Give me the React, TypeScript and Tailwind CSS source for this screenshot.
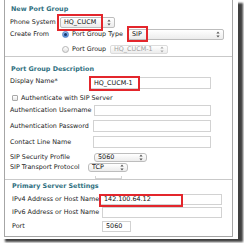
import type { ReactNode } from 'react'

function Arrows({ color = '#555' }: { color?: string }) {
  return (
    <svg width="4" height="7" viewBox="0 0 4 7" className="shrink-0">
      <path d="M2 0.5L3.6 2.6H0.4Z M2 6.5L0.4 4.4H3.6Z" fill={color} />
    </svg>
  )
}

function Select({ className, value, disabled }: { className: string; value: string; disabled?: boolean }) {
  return (
    <div
      className={`flex items-center justify-between rounded-[2px] border px-[3px] bg-gradient-to-b from-white to-[#ececec] ${
        disabled ? 'border-[#dcdcdc] text-[#a0a0a0]' : 'border-[#bdbdbd] text-[#111]'
      } ${className}`}
    >
      <span className="leading-none">{value}</span>
      <Arrows color={disabled ? '#aaa' : '#555'} />
    </div>
  )
}

function Input({ className, value }: { className: string; value?: string }) {
  return (
    <div className={`flex items-center border border-[#d2d2d2] bg-white px-[3px] text-[#111] ${className}`}>
      <span className="leading-none">{value}</span>
    </div>
  )
}

// red annotation box drawn over the field
function Mark({ box, children }: { box: string; children: ReactNode }) {
  return (
    <div className="relative">
      {children}
      <div className={`absolute border-2 border-[#e3262c] ${box}`} />
    </div>
  )
}

function Radio({ on }: { on?: boolean }) {
  return on ? (
    <div className="w-[7px] h-[7px] rounded-full border border-[#5d86c4] bg-gradient-to-b from-[#9cc3f0] to-[#4c8ee0] flex items-center justify-center shrink-0">
      <div className="w-[3px] h-[3px] rounded-full bg-[#17386e]" />
    </div>
  ) : (
    <div className="w-[7px] h-[7px] rounded-full border border-[#b4b4b4] bg-gradient-to-b from-white to-[#e2e2e2] shrink-0" />
  )
}

function Row({ label, labelW, h, mt, children }: { label: string; labelW: string; h: string; mt: string; children: ReactNode }) {
  return (
    <div className={`flex items-center ${h} ${mt}`}>
      <span className={`shrink-0 leading-none ${labelW}`}>{label}</span>
      {children}
    </div>
  )
}

export default function App() {
  return (
    <div className="w-[244px] h-[243px] bg-white font-['DejaVu_Sans',Verdana,sans-serif] text-[6.4px] text-[#222]">
      <div className="w-[238px] h-[239px] bg-white shadow-[5px_3px_2px_rgba(0,0,0,0.75)]">
        <div className="ml-[4px] w-[229px] h-[237px] border-x border-b border-[#a6a6a6] flex flex-col">
          {/* New Port Group */}
          <section className="h-[57px] shrink-0 border-b border-[#c9c9c9] pt-[4px] pl-[5px] flex flex-col">
            <h2 className="h-[10px] leading-[10px] pl-[1px] font-bold text-[#2f6f80]">New Port Group</h2>
            <Row label="Phone System" labelW="w-[50px]" h="h-[16px]" mt="mt-0">
              <Mark box="left-[-3px] top-[-3px] w-[46px] h-[17px]">
                <Select className="w-[55px] h-[11px]" value="HQ_CUCM" />
              </Mark>
            </Row>
            <Row label="Create From" labelW="w-[52px]" h="h-[8px]" mt="mt-0">
              <Radio on />
              <span className="ml-[3px] w-[56px] leading-none">Port Group Type</span>
              <Mark box="left-[-1px] top-[-3px] w-[21px] h-[16px]">
                <Select className="w-[96px] h-[11px]" value="SIP" />
              </Mark>
            </Row>
            <div className="flex items-center h-[10px] mt-[6px] pl-[52px]">
              <Radio />
              <span className="ml-[3px] w-[38px] leading-none">Port Group</span>
              <Select className="w-[58px] h-[9px]" value="HQ_CUCM-1" disabled />
            </div>
          </section>

          {/* Port Group Description */}
          <section className="h-[123px] shrink-0 border-b border-[#c9c9c9] pt-[7px] pl-[5px] flex flex-col">
            <h2 className="h-[10px] leading-[10px] pl-[1px] font-bold text-[#2f6f80]">Port Group Description</h2>
            <div className="flex h-[12px] mt-[3px]">
              <span className="w-[80px] shrink-0 leading-[8px]">Display Name*</span>
              <Mark box="left-[-1px] top-[-1px] w-[51px] h-[15px]">
                <Input className="w-[121px] h-[12px]" value="HQ_CUCM-1" />
              </Mark>
            </div>
            <div className="flex items-center h-[10px] mt-[4px] pl-[2px]">
              <div className="w-[6px] h-[6px] rounded-[1px] border border-[#a9a9a9] bg-gradient-to-b from-white to-[#e6e6e6]" />
              <span className="ml-[3px] leading-none">Authenticate with SIP Server</span>
            </div>
            <Row label="Authentication Username" labelW="w-[84px]" h="h-[11px]" mt="mt-[2px]">
              <Input className="w-[117px] h-[11px]" />
            </Row>
            <Row label="Authentication Password" labelW="w-[83px]" h="h-[12px]" mt="mt-[4px]">
              <Input className="w-[118px] h-[12px]" />
            </Row>
            <Row label="Contact Line Name" labelW="w-[83px]" h="h-[12px]" mt="mt-[4px]">
              <Input className="w-[118px] h-[12px]" />
            </Row>
            <Row label="SIP Security Profile" labelW="w-[84px]" h="h-[9px]" mt="mt-[5px]">
              <Select className="w-[53px] h-[9px] rounded-[3px]" value="5060" />
            </Row>
            <Row label="SIP Transport Protocol" labelW="w-[78px]" h="h-[9px]" mt="mt-[1px]">
              <Select className="w-[40px] h-[9px] rounded-[3px]" value="TCP" />
            </Row>
            <div className="ml-[85px] mt-[4px] w-[27px] h-[3px] border-x border-b border-[#d4d4d4]" />
          </section>

          {/* Primary Server Settings */}
          <section className="flex-1 pt-[2px] pl-[7px] flex flex-col">
            <h2 className="h-[8px] leading-[8px] font-bold text-[#2f6f80]">Primary Server Settings</h2>
            <Row label="IPv4 Address or Host Name" labelW="w-[88px]" h="h-[11px]" mt="mt-[4px]">
              <Mark box="left-[-1px] top-0 w-[84px] h-[13px]">
                <Input className="w-[122px] h-[11px]" value="142.100.64.12" />
              </Mark>
            </Row>
            <Row label="IPv6 Address or Host Name" labelW="w-[90px]" h="h-[11px]" mt="mt-[2px]">
              <Input className="w-[120px] h-[11px]" />
            </Row>
            <Row label="Port" labelW="w-[90px]" h="h-[11px]" mt="mt-[3px]">
              <Input className="w-[29px] h-[11px]" value="5060" />
            </Row>
          </section>
        </div>
      </div>
    </div>
  )
}
